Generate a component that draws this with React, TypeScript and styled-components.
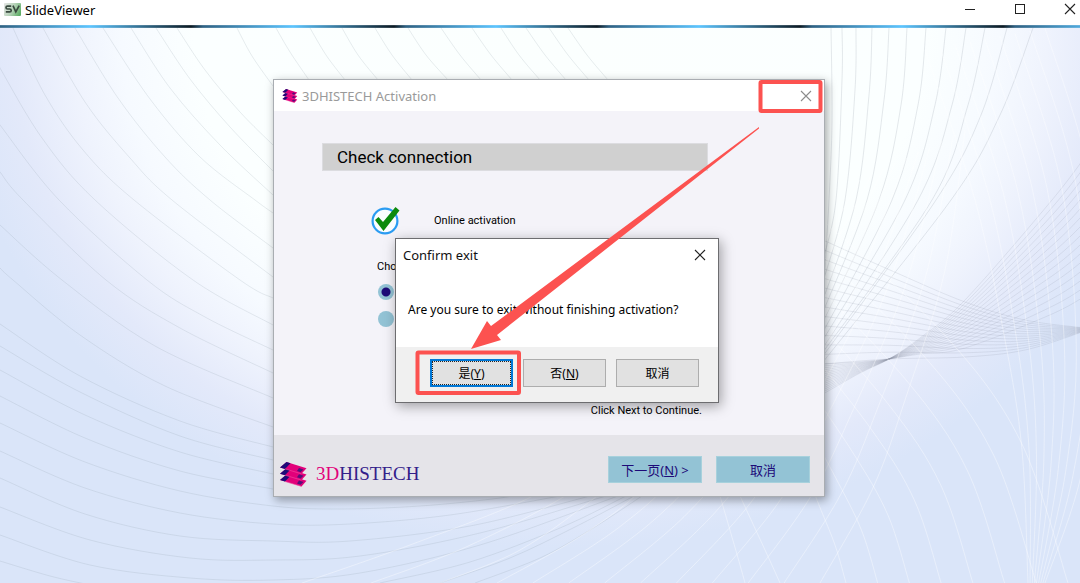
import React from 'react';
import styled, { createGlobalStyle } from 'styled-components';

const uiFont = `"Noto Sans", "Noto Sans CJK SC", sans-serif`;
const formFont = `Roboto, "Noto Sans", "Noto Sans CJK SC", sans-serif`;
const red = '#fc5250';
const navy = '#1d0a78';
const magenta = '#e2007a';

const GlobalStyle = createGlobalStyle`
  *, *::before, *::after { box-sizing: border-box; }
  html, body { margin: 0; height: 100%; }
  body { font-family: ${uiFont}; font-size: 13px; color: #000; overflow: hidden; }
  #root { height: 100%; }
  button, input { font: inherit; margin: 0; }
`;

const Shell = styled.div`
  display: flex;
  flex-direction: column;
  height: 100%;
  min-height: 500px;
`;

const AppBar = styled.header`
  display: flex;
  align-items: center;
  height: 25px;
  padding: 0 2px 0 4px;
  gap: 4px;
  background: #fff;
`;

const AppName = styled.h1`
  flex: 1;
  margin: 0;
  padding-bottom: 6px;
  font-size: 13px;
  font-weight: 400;
  line-height: 18px;
`;

const AppIcon = styled.svg`
  margin-bottom: 6px;
`;

const Controls = styled.div`
  display: flex;
  gap: 34px;
  padding-bottom: 7px;
`;

const IconButton = styled.button<{ $color?: string }>`
  display: flex;
  align-items: center;
  justify-content: center;
  width: 16px;
  height: 16px;
  padding: 0;
  border: 0;
  background: none;
  color: ${(p) => p.$color ?? '#222'};
`;

const Strip = styled.div`
  height: 3px;
  background:
    linear-gradient(rgba(255, 255, 255, 0.25), transparent 40%, transparent 60%, rgba(255, 255, 255, 0.25)),
    repeating-linear-gradient(90deg, #2f6284 0, #5cc4fe 90px, #0b1a24 191px, #2f6284 203px);
`;

const Desktop = styled.main`
  position: relative;
  flex: 1;
`;

const Backdrop = styled.svg`
  position: absolute;
  inset: 0;
  width: 100%;
  height: 100%;
`;

const Window = styled.section`
  position: absolute;
  top: 51px;
  left: calc(50% - 267px);
  display: flex;
  flex-direction: column;
  width: 552px;
  height: 418px;
  border: 1px solid #a9adb2;
  background: #f4f3f9;
  box-shadow: 2px 3px 9px rgba(0, 0, 0, 0.36);
`;

const WindowBar = styled.header`
  display: flex;
  align-items: center;
  height: 31px;
  padding: 0 10px 0 8px;
  gap: 4px;
  background: #fff;
`;

const WindowTitle = styled.h2<{ $color?: string }>`
  flex: 1;
  margin: 0;
  font-size: 13px;
  font-weight: 400;
  line-height: 18px;
  color: ${(p) => p.$color ?? '#111'};
`;

const Body = styled.div`
  flex: 1;
  display: flex;
  flex-direction: column;
  padding: 32px 116px 16px 48px;
  font-family: ${formFont};
  font-size: 11px;
  line-height: 16px;
`;

const Heading = styled.h3`
  margin: 0;
  padding: 0 14px;
  border: 1px solid #dcdce0;
  background: #d0d0d0;
  font-size: 17px;
  font-weight: 400;
  line-height: 26px;
`;

const Status = styled.div`
  display: flex;
  align-items: center;
  gap: 34px;
  height: 32px;
  margin: 34px 0 0 48px;
`;

const Options = styled.fieldset`
  display: flex;
  flex-direction: column;
  align-items: flex-start;
  gap: 11px;
  margin: 22px 0 0 55px;
  padding: 0;
  border: 0;
`;

const Legend = styled.legend`
  padding: 0;
  margin-bottom: 9px;
`;

const Radio = styled.input`
  appearance: none;
  width: 16px;
  height: 16px;
  margin-left: 1px;
  border-radius: 50%;
  background: #93c3d5;
  &:checked {
    background: radial-gradient(circle, ${navy} 4px, #93c3d5 5px);
  }
`;

const Hint = styled.p`
  margin: auto 6px 0 0;
  text-align: right;
`;

const Footer = styled.footer`
  display: flex;
  align-items: center;
  justify-content: space-between;
  height: 61px;
  padding: 7px 14px 0 6px;
  background: #e5e4e9;
`;

const Brand = styled.div`
  display: flex;
  align-items: center;
  gap: 9px;
  padding-top: 10px;
  font-family: "Liberation Serif", serif;
  font-size: 19px;
  line-height: 24px;
  color: #33208a;
`;

const BrandAccent = styled.span`
  color: ${magenta};
`;

const Actions = styled.div`
  display: flex;
  gap: 14px;
`;

const WizardButton = styled.button`
  width: 94px;
  height: 27px;
  padding: 0;
  border: 1px solid #a7d1dc;
  background: #93c3d5;
  color: ${navy};
  font-size: 13px;
`;

const Dialog = styled.section`
  position: absolute;
  top: 158px;
  left: 121px;
  display: flex;
  flex-direction: column;
  width: 324px;
  height: 165px;
  border: 1px solid #6d6d70;
  background: #fff;
  box-shadow: 2px 3px 12px rgba(0, 0, 0, 0.36);
`;

const DialogBar = styled.header`
  display: flex;
  align-items: center;
  height: 32px;
  padding: 0 10px 0 7px;
`;

const Message = styled.p`
  flex: 1;
  display: flex;
  align-items: center;
  margin: 0;
  padding: 0 12px 0;
  font-size: 12px;
`;

const DialogActions = styled.div`
  display: flex;
  justify-content: flex-end;
  align-items: center;
  gap: 10px;
  height: 55px;
  padding: 0 19px 4px 0;
  background: #f0f0f0;
`;

const DialogButton = styled.button<{ $focused?: boolean }>`
  width: 83px;
  height: 28px;
  padding: 0;
  border: ${(p) => (p.$focused ? '2px solid #0078d7' : '1px solid #adadad')};
  outline: ${(p) => (p.$focused ? '1px dotted #222' : 'none')};
  outline-offset: -3px;
  background: #e1e1e1;
  font-size: 12px;
`;

const Markup = styled.svg`
  position: absolute;
  top: -1px;
  left: -1px;
  pointer-events: none;
`;

type Point = [number, number];

/* Catmull-Rom spline through the points, written as cubic segments. */
const smooth = (pts: Point[]) =>
  pts.slice(0, -1).reduce((d, p1, i) => {
    const p0 = pts[i - 1] ?? p1;
    const p2 = pts[i + 1];
    const p3 = pts[i + 2] ?? p2;
    const c = [
      p1[0] + (p2[0] - p0[0]) / 6, p1[1] + (p2[1] - p0[1]) / 6,
      p2[0] - (p3[0] - p1[0]) / 6, p2[1] - (p3[1] - p1[1]) / 6,
      p2[0], p2[1],
    ].map((n) => n.toFixed(1));
    return `${d}C${c.join(' ')}`;
  }, `M${pts[0].join(' ')}`);

/* A fan of n curves spread evenly between two outer ones. */
const fan = (a: Point[], b: Point[], n: number): Point[][] =>
  Array.from({ length: n }, (_, k) => {
    const t = k / (n - 1);
    return a.map((p, i): Point => [p[0] + (b[i][0] - p[0]) * t, p[1] + (b[i][1] - p[1]) * t]);
  });

const sweep: Point[][] = [
  [[-5, 165], [0, 172], [23, 200], [106, 280], [180, 328], [273, 373]],
  [[-5, 118], [0, 125], [59, 200], [147, 280], [205, 317], [273, 350]],
  [[-5, 58], [0, 68], [42, 138], [95, 200], [193, 280], [273, 325]],
  [[13, 28], [45, 95], [83, 150], [134, 200], [240, 280], [273, 298]],
  [[43, 28], [85, 102], [130, 158], [172, 200], [273, 277]],
  [[75, 28], [118, 98], [165, 157], [210, 200], [273, 248]],
  [[103, 28], [150, 99], [200, 157], [255, 200], [273, 213]],
  [[131, 28], [170, 88], [220, 145], [273, 195]],
  [[156, 28], [190, 79], [230, 127], [273, 171]],
  [[177, 28], [205, 70], [240, 112], [273, 145]],
  [[237, 28], [252, 56], [273, 86]],
  [[276, 28], [290, 52], [309, 80]],
  [[310, 28], [326, 55], [345, 80]],
  [[342, 28], [358, 55], [378, 80]],
  [[375, 28], [392, 55], [412, 80]],
  [[408, 28], [426, 55], [448, 80]],
  [[441, 28], [460, 55], [481, 80]],
  [[472, 28], [491, 55], [512, 80]],
  [[501, 28], [519, 55], [540, 80]],
  [[526, 28], [545, 55], [566, 80]],
  [[549, 28], [568, 55], [589, 80]],
  [[568, 28], [587, 55], [608, 80]],
  [[0, 225], [62, 280], [155, 346], [273, 398]],
  [[0, 268], [13, 280], [80, 335], [165, 386], [273, 427]],
  [[0, 324], [80, 376], [180, 421], [273, 447]],
  [[0, 346], [80, 392], [180, 436], [273, 460]],
  [[0, 370], [85, 415], [180, 452], [273, 474]],
  [[0, 396], [85, 438], [180, 471], [273, 489]],
  [[0, 423], [85, 462], [180, 491], [273, 506], [340, 509], [420, 506], [500, 498], [540, 490]],
  [[0, 451], [85, 488], [180, 513], [273, 524], [350, 524], [450, 515], [560, 496]],
  [[0, 478], [85, 514], [180, 536], [273, 541], [350, 541], [470, 526], [590, 496]],
  [[0, 507], [90, 540], [190, 558], [273, 560], [360, 556], [480, 533], [606, 496]],
  [[0, 535], [90, 565], [190, 578], [273, 580], [360, 573], [480, 545], [618, 496]],
  [[0, 561], [50, 576], [90, 585]],
  [[380, 583], [470, 562], [560, 528], [626, 496]],
  [[440, 583], [510, 558], [575, 527], [634, 496]],
  [[475, 583], [540, 558], [590, 530], [642, 496]],
];

const rightSweep: Point[][] = [
  [[831, 28], [832, 120], [829, 200], [823, 300]],
  [[842, 28], [842, 80], [836, 200], [823, 260]],
  [[856, 28], [855, 90], [845, 200], [823, 282]],
  [[872, 28], [869, 95], [856, 200], [823, 300]],
  [[889, 28], [884, 100], [867, 200], [823, 312]],
  [[907, 28], [901, 105], [879, 200], [823, 322]],
  [[926, 28], [918, 105], [892, 200], [823, 332]],
  [[946, 28], [935, 105], [905, 200], [823, 340]],
  [[966, 28], [952, 105], [918, 200], [823, 348]],
  [[985, 28], [968, 105], [932, 200], [823, 352]],
  [[1007, 28], [981, 115], [936, 200], [823, 356]],
  [[1033, 28], [1000, 115], [951, 200], [823, 362]],
];

const mesh: Point[][] = [
  ...fan(
    [[823, 240], [890, 270], [965, 302], [1025, 320], [1085, 328]],
    [[823, 364], [890, 359], [965, 357], [1025, 350], [1085, 331]],
    14,
  ),
  ...fan(
    [[1090, 150], [1052, 200], [965, 300], [920, 338], [889, 359], [860, 373], [823, 394]],
    [[1090, 293], [1052, 314], [965, 348], [920, 354], [889, 359], [860, 362], [823, 364]],
    16,
  ),
];

const light: Point[][] = [
  ...fan(
    [[740, 496], [780, 583], [790, 610], [800, 640]],
    [[720, 496], [745, 583], [750, 610], [760, 640]],
    2,
  ),
  ...fan(
    [[790, 430], [817, 500], [835, 545], [846, 583]],
    [[800, 200], [940, 330], [1020, 440], [1068, 583]],
    8,
  ),
  ...fan(
    [[302, 583], [410, 545], [533, 496], [600, 450]],
    [[440, 583], [520, 550], [597, 496], [650, 450]],
    3,
  ),
  ...fan(
    [[497, 583], [590, 530], [660, 470], [770, 330], [860, 180]],
    [[820, 583], [872, 490], [905, 400], [945, 270], [965, 130]],
    10,
  ),
  ...fan(
    [[925, 50], [975, 200], [1005, 340], [1022, 450], [1028, 583]],
    [[1045, 28], [1090, 180], [1100, 350], [1080, 480], [1045, 583]],
    9,
  ),
];

const Lines = ({ sets, stroke, opacity }: { sets: Point[][]; stroke: string; opacity: number }) => (
  <g fill="none" stroke={stroke} strokeOpacity={opacity}>
    {sets.map((pts, i) => (
      <path key={i} d={smooth(pts)} />
    ))}
  </g>
);

const Wallpaper = () => (
  <Backdrop viewBox="0 28 1080 555" preserveAspectRatio="xMidYMin slice" aria-hidden="true">
    <defs>
      <radialGradient
        id="glow"
        gradientUnits="userSpaceOnUse"
        cx="0"
        cy="0"
        r="1"
        gradientTransform="translate(560 28) scale(610 520)"
      >
        <stop offset="0" stopColor="#fbfffe" />
        <stop offset="0.6" stopColor="#fbffff" />
        <stop offset="0.72" stopColor="#f6faff" />
        <stop offset="0.8" stopColor="#eff3fd" />
        <stop offset="0.9" stopColor="#e3e9fa" />
        <stop offset="1" stopColor="#dae5f9" />
      </radialGradient>
    </defs>
    <rect y="28" width="1080" height="555" fill="url(#glow)" />
    <Lines sets={sweep} stroke="#8c98a4" opacity={0.19} />
    <Lines sets={rightSweep} stroke="#8c98a4" opacity={0.22} />
    <Lines sets={mesh} stroke="#8890a0" opacity={0.17} />
    <Lines sets={light} stroke="#ffffff" opacity={0.38} />
  </Backdrop>
);

const Cross = ({ size }: { size: number }) => (
  <svg width={size} height={size} viewBox="0 0 12 12" aria-hidden="true">
    <path d="M1 1L11 11M11 1L1 11" fill="none" stroke="currentColor" strokeWidth="1.1" />
  </svg>
);

const SlidesLogo = ({ width, height }: { width: number; height: number }) => (
  <svg width={width} height={height} viewBox="0 0 27 25" aria-hidden="true">
    {[12.6, 6.3, 0].map((y) => (
      <g key={y} transform={`translate(0 ${y})`}>
        <path d="M6.5 0L26.5 6.2L21.5 11.8L0 5.4Z" fill={magenta} />
        <path d="M6.5 0L10.5 1.2L5 6.9L0 5.4Z" fill={navy} />
        <path d="M19 6L23.5 7.4L20.5 10.2L17 9Z" fill="#56107a" />
        <path d="M5 6.9L21.5 11.8" stroke="#f04fa2" strokeWidth=".6" />
      </g>
    ))}
  </svg>
);

const ViewerLogo = () => (
  <AppIcon width="17" height="15" viewBox="0 0 17 15" aria-hidden="true">
    <defs>
      <linearGradient id="tile" x1="0" x2="1" y1="0.3" y2="0.7">
        <stop offset="0" stopColor="#dfe3df" />
        <stop offset="0.5" stopColor="#b4d2b6" />
        <stop offset="1" stopColor="#5fae66" />
      </linearGradient>
    </defs>
    <rect y="1" width="17" height="13" rx="1" fill="url(#tile)" />
    <path
      d="M7.2 4.2H3.4Q2 4.2 2 5.6T3.4 7H5.8Q7.2 7 7.2 8.4T5.8 9.8H1.8M9 3.6L11.8 9.8L15.2 3.6"
      fill="none"
      stroke="#3a4a3f"
      strokeWidth="1.7"
    />
  </AppIcon>
);

const Check = () => (
  <svg width="30" height="30" viewBox="0 0 30 30" aria-hidden="true">
    <circle cx="15" cy="15" r="12.4" fill="#fbfdff" stroke="#2b9cf2" strokeWidth="2.2" />
    <path d="M5 14L8.5 11L13 16L25.5 1L29.5 4.5L13.5 25Z" fill="#0c8a0c" />
  </svg>
);

const Annotations = () => (
  <Markup width="552" height="418" viewBox="273 79 552 418" aria-hidden="true">
    <g fill="none" stroke={red} strokeWidth="4">
      <rect x="760.5" y="82" width="60" height="29" rx="1" />
      <rect x="417.5" y="352.5" width="101.5" height="40.5" rx="1" />
    </g>
    <path d="M759 127L491 326L487 321L471 349L501 340L497 335L759 128.5Z" fill={red} />
  </Markup>
);

export default function App() {
  return (
    <Shell>
      <GlobalStyle />
      <AppBar>
        <ViewerLogo />
        <AppName>SlideViewer</AppName>
        <Controls>
          <IconButton aria-label="Minimize">
            <svg width="12" height="12" viewBox="0 0 12 12">
              <path d="M1 6.5H11" stroke="currentColor" />
            </svg>
          </IconButton>
          <IconButton aria-label="Maximize">
            <svg width="12" height="12" viewBox="0 0 12 12">
              <rect x="1.5" y="1.5" width="9" height="9" fill="none" stroke="currentColor" />
            </svg>
          </IconButton>
          <IconButton aria-label="Close">
            <Cross size={12} />
          </IconButton>
        </Controls>
      </AppBar>
      <Strip />
      <Desktop>
        <Wallpaper />
        <Window aria-labelledby="activation-title">
          <WindowBar>
            <SlidesLogo width={16} height={14} />
            <WindowTitle id="activation-title" $color="#9a9a9a">
              3DHISTECH Activation
            </WindowTitle>
            <IconButton aria-label="Close" $color="#8c8c8c">
              <Cross size={12} />
            </IconButton>
          </WindowBar>
          <Body>
            <Heading>Check connection</Heading>
            <Status>
              <Check />
              <span>Online activation</span>
            </Status>
            <Options>
              <Legend>Choose</Legend>
              <Radio type="radio" name="mode" aria-label="Online" defaultChecked />
              <Radio type="radio" name="mode" aria-label="Offline" />
            </Options>
            <Hint>Click Next to Continue.</Hint>
          </Body>
          <Footer>
            <Brand>
              <SlidesLogo width={27} height={25} />
              <span>
                <BrandAccent>3D</BrandAccent>HISTECH
              </span>
            </Brand>
            <Actions>
              <WizardButton>
                下一页(<u>N</u>) &gt;
              </WizardButton>
              <WizardButton>取消</WizardButton>
            </Actions>
          </Footer>
          <Dialog role="alertdialog" aria-labelledby="confirm-title">
            <DialogBar>
              <WindowTitle id="confirm-title">Confirm exit</WindowTitle>
              <IconButton aria-label="Close">
                <Cross size={12} />
              </IconButton>
            </DialogBar>
            <Message>Are you sure to exit without finishing activation?</Message>
            <DialogActions>
              <DialogButton $focused>
                是(<u>Y</u>)
              </DialogButton>
              <DialogButton>
                否(<u>N</u>)
              </DialogButton>
              <DialogButton>取消</DialogButton>
            </DialogActions>
          </Dialog>
          <Annotations />
        </Window>
      </Desktop>
    </Shell>
  );
}
